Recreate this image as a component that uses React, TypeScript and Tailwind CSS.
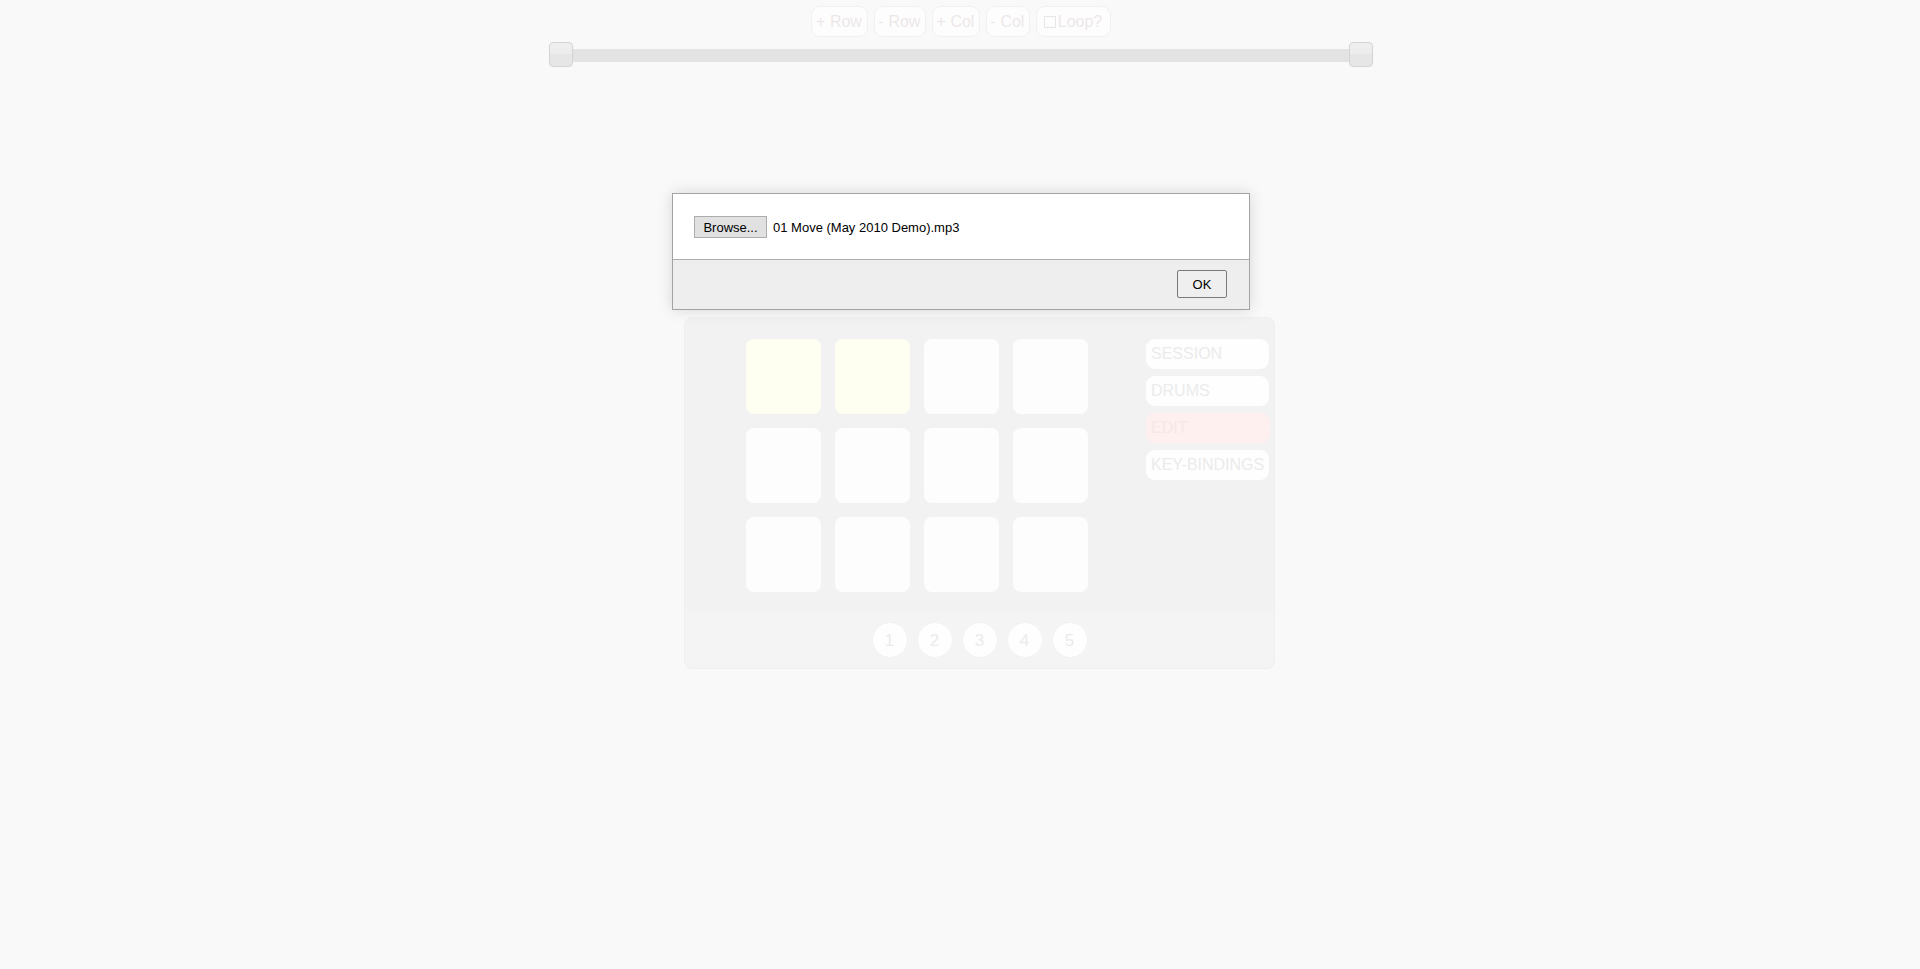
import React from "react";

const pads = [
  ["y", "y", "w", "w"],
  ["w", "w", "w", "w"],
  ["w", "w", "w", "w"],
];

function TopBtn({ children, w }: { children: React.ReactNode; w: string }) {
  return (
    <div
      className={`${w} h-[31px] flex items-center justify-center rounded-[9px] border border-[#f1f1f1] bg-[#fdfdfd] text-[16px] text-[#ede8e8] leading-none`}
    >
      {children}
    </div>
  );
}

function SideBtn({ label, red }: { label: string; red?: boolean }) {
  return (
    <div
      className={`h-[30px] w-[124px] flex items-center pl-[5px] rounded-[9px] text-[16px] leading-none ${
        red
          ? "bg-[#fdf0ef] text-[#f7e7e6]"
          : "bg-[#fefefe] text-[#ebebeb] border-r border-r-[#f0f0f0]"
      }`}
    >
      {label}
    </div>
  );
}

export default function App() {
  return (
    <div
      className="relative w-full h-[969px] bg-[#f9f9f9] overflow-hidden"
      style={{ fontFamily: '"Liberation Sans", Arial, sans-serif' }}
    >
      {/* toolbar */}
      <div className="flex justify-center gap-[6px] pt-[6px] pl-[1px]">
        <TopBtn w="w-[57px]">+ Row</TopBtn>
        <TopBtn w="w-[52px]">- Row</TopBtn>
        <TopBtn w="w-[48px]">+ Col</TopBtn>
        <TopBtn w="w-[44px]">- Col</TopBtn>
        <TopBtn w="w-[75px]">
          <span className="inline-block w-[12px] h-[12px] border border-[#e6e6e6] mr-[2px]" />
          Loop?
        </TopBtn>
      </div>

      {/* slider */}
      <div className="mt-[5px] flex justify-center pl-[2px]">
        <div className="relative w-[824px] h-[25px]">
          <div className="absolute left-0 right-0 top-[7px] h-[13px] bg-[#e3e3e3]" />
          <div className="absolute left-0 top-0 w-[24px] h-[25px] rounded-[4px] border border-[#d4d4d4] bg-[linear-gradient(to_bottom,#efefef_0%,#ececec_50%,#e6e6e6_50%,#e6e6e6_100%)]" />
          <div className="absolute right-0 top-0 w-[24px] h-[25px] rounded-[4px] border border-[#d4d4d4] bg-[linear-gradient(to_bottom,#efefef_0%,#ececec_50%,#e6e6e6_50%,#e6e6e6_100%)]" />
        </div>
      </div>

      {/* main panel */}
      <div className="mt-[250px] ml-[684px] w-[591px] h-[352px] rounded-[8px] bg-[#f4f4f4] border border-[#efefef] flex flex-col">
        <div className="h-[295px] rounded-[8px] bg-[#f2f2f2] flex pt-[21px]">
          <div className="ml-[61px] grid grid-cols-4 gap-[14px] w-[342px] h-[253px]">
            {pads.flat().map((p, i) => (
              <div
                key={i}
                className={`w-[75px] h-[75px] rounded-[8px] ${
                  p === "y" ? "bg-[#fefff0]" : "bg-[#fdfdfd]"
                }`}
              />
            ))}
          </div>
          <div className="ml-[58px] flex flex-col gap-[7px]">
            <SideBtn label="SESSION" />
            <SideBtn label="DRUMS" />
            <SideBtn label="EDIT" red />
            <SideBtn label="KEY-BINDINGS" />
          </div>
        </div>
        <div className="flex-1 flex items-center justify-center gap-[9px] pb-[1px]">
          {[1, 2, 3, 4, 5].map((n) => (
            <div
              key={n}
              className="w-[36px] h-[36px] rounded-full bg-[#fefefe] border border-[#f2f2f2] shadow-[1px_0_0_#f6f6f6] flex items-center justify-center text-[17px] text-[#ebebeb] leading-none"
            >
              {n}
            </div>
          ))}
        </div>
      </div>

      {/* modal dialog */}
      <div className="absolute left-[672px] top-[193px] w-[578px] h-[117px] border border-[#a3a3a3] bg-white shadow-[0_0_14px_rgba(0,0,0,0.14)] flex flex-col">
        <div className="h-[66px] flex items-start pl-[21px] pt-[22px] border-b border-[#adadad]">
          <div className="w-[73px] h-[22px] flex items-center justify-center bg-[#e1e1e1] border border-[#adadad] text-[13px] text-black leading-none">
            Browse...
          </div>
          <span className="ml-[6px] mt-[5px] text-[13px] text-black leading-none">
            01 Move (May 2010 Demo).mp3
          </span>
        </div>
        <div className="flex-1 bg-[#eeeeee] flex justify-end items-start pt-[10px] pr-[22px]">
          <div className="w-[50px] h-[28px] flex items-center justify-center bg-[#efefef] border border-[#7a7a7a] rounded-[2px] text-[13px] text-black leading-none">
            OK
          </div>
        </div>
      </div>
    </div>
  );
}
